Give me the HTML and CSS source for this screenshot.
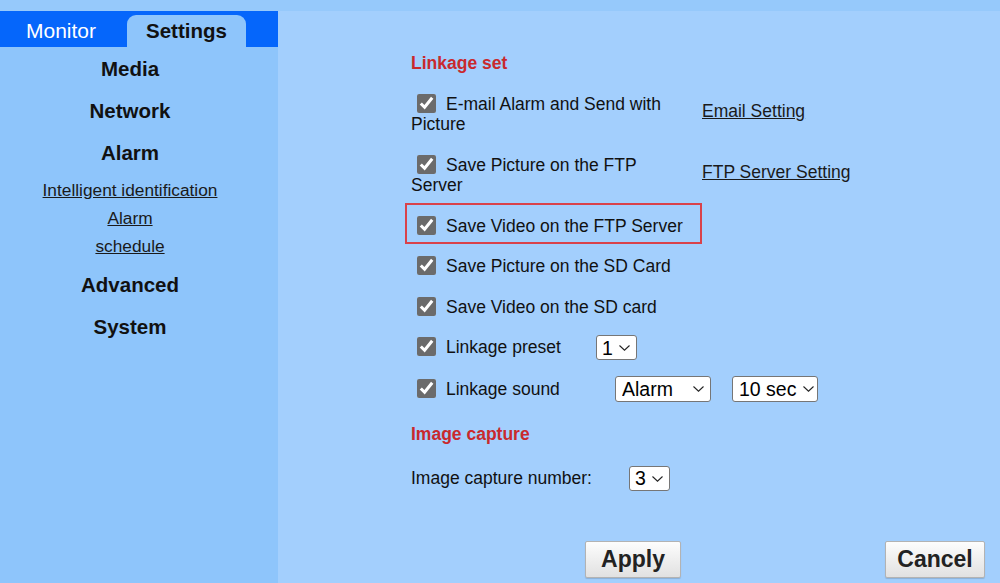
FILE: index.html
```html
<!DOCTYPE html>
<html lang="en">
<head>
    <meta charset="UTF-8">
    <meta name="viewport" content="width=device-width, initial-scale=1.0">
    <title>Settings - Linkage set</title>
    <link rel="stylesheet" href="styles.css">
</head>
<body>

<div class="top-strip"></div>

<div class="layout">
    <!-- Menu lateral -->
    <aside class="sidebar">
        <div class="tabs">
            <div class="tab">Monitor</div>
            <div class="tab active">Settings</div>
        </div>
        <nav class="menu">
            <div class="menu-head">Media</div>
            <div class="menu-head">Network</div>
            <div class="menu-head">Alarm</div>
            <div class="submenu">
                <a href="#">Intelligent identification</a>
                <a href="#">Alarm</a>
                <a href="#">schedule</a>
            </div>
            <div class="menu-head">Advanced</div>
            <div class="menu-head">System</div>
        </nav>
    </aside>

    <!-- Contenido principal -->
    <main class="content">
        <div class="section-title">Linkage set</div>

        <div class="row">
            <label class="cell-label"><input type="checkbox" checked>E-mail Alarm and Send with Picture</label>
            <a href="#" class="cell-link">Email Setting</a>
        </div>
        <div class="row">
            <label class="cell-label"><input type="checkbox" checked>Save Picture on the FTP Server</label>
            <a href="#" class="cell-link">FTP Server Setting</a>
        </div>
        <div class="row">
            <label class="cell-label marked"><input type="checkbox" checked>Save Video on the FTP Server</label>
        </div>
        <div class="row">
            <label class="cell-label"><input type="checkbox" checked>Save Picture on the SD Card</label>
        </div>
        <div class="row">
            <label class="cell-label"><input type="checkbox" checked>Save Video on the SD card</label>
        </div>

        <div class="row row-select">
            <label class="cell-label preset-label"><input type="checkbox" checked>Linkage preset</label>
            <span class="sel-wrap">
                <select class="sel sel-num">
                    <option>1</option>
                    <option>2</option>
                    <option>3</option>
                </select>
                <svg class="chev" width="11" height="6" viewBox="0 0 11 6"><path d="M0.5 0.5 L5.5 5.2 L10.5 0.5" fill="none" stroke="#222" stroke-width="1.1"/></svg>
            </span>
        </div>
        <div class="row row-select">
            <label class="cell-label sound-label"><input type="checkbox" checked>Linkage sound</label>
            <span class="sel-wrap sound-wrap">
                <select class="sel sel-sound">
                    <option>Alarm</option>
                    <option>Bell</option>
                </select>
                <svg class="chev" width="11" height="6" viewBox="0 0 11 6"><path d="M0.5 0.5 L5.5 5.2 L10.5 0.5" fill="none" stroke="#222" stroke-width="1.1"/></svg>
            </span>
            <span class="sel-wrap time-wrap">
                <select class="sel sel-time">
                    <option>10 sec</option>
                    <option>20 sec</option>
                    <option>30 sec</option>
                </select>
                <svg class="chev" width="11" height="6" viewBox="0 0 11 6"><path d="M0.5 0.5 L5.5 5.2 L10.5 0.5" fill="none" stroke="#222" stroke-width="1.1"/></svg>
            </span>
        </div>

        <div class="section-title second">Image capture</div>

        <div class="row row-select capture-row">
            <span class="cell-label capture-label">Image capture number:</span>
            <span class="sel-wrap">
                <select class="sel sel-num">
                    <option>3</option>
                    <option>1</option>
                    <option>2</option>
                </select>
                <svg class="chev" width="11" height="6" viewBox="0 0 11 6"><path d="M0.5 0.5 L5.5 5.2 L10.5 0.5" fill="none" stroke="#222" stroke-width="1.1"/></svg>
            </span>
        </div>

        <div class="buttons">
            <button class="btn btn-apply">Apply</button>
            <button class="btn btn-cancel">Cancel</button>
        </div>
    </main>
</div>

</body>
</html>
```

FILE: styles.css
```css
body {
    margin: 0;
    height: 583px;
    overflow: hidden;
    font-family: "Liberation Sans", Arial, sans-serif;
    background-color: #a3cffd;
    color: #111;
}

/* Franja superior */
.top-strip {
    height: 11px;
    background-color: #96c9fb;
}

.layout {
    display: flex;
    height: 572px;
}

/* Menu lateral */
.sidebar {
    width: 278px;
    flex-shrink: 0;
    background-color: #8ec5fb;
}

.tabs {
    display: flex;
    align-items: flex-end;
    gap: 5px;
    height: 36px;
    background-color: #0566fb;
}

.tab {
    height: 32px;
    display: flex;
    align-items: center;
    padding: 0 26px;
    font-size: 21px;
    color: #fff;
}

.tab.active {
    padding: 0 19px;
    font-size: 20.5px;
    font-weight: bold;
    color: #111;
    background-color: #8ec5fb;
    border-radius: 9px 9px 0 0;
}

.menu {
    text-align: center;
    padding: 1px 18px 0 0;
}

.menu-head {
    font-size: 20.5px;
    font-weight: bold;
    line-height: 42px;
}

.submenu {
    display: flex;
    flex-direction: column;
    align-items: center;
    margin: 2px 0 4px;
}

.submenu a {
    font-size: 17.3px;
    line-height: 28px;
    color: #1a1a1a;
}

/* Contenido */
.content {
    flex: 1;
    padding: 32px 0 0 133px;
    font-size: 17.5px;
    line-height: 20.5px;
    color: #111;
}

.section-title {
    padding: 10px 0;
    font-weight: bold;
    color: #c9292d;
}

.section-title.second {
    margin-top: 4px;
}

.row {
    display: flex;
    align-items: center;
    padding: 10px 0;
}

.row-select {
    padding: 8px 0;
}

.capture-row {
    padding-top: 11px;
}

.cell-label {
    box-sizing: border-box;
    width: 291px;
    padding-right: 14px;
    position: relative;
}

.cell-label input {
    width: 19px;
    height: 19px;
    margin: 0 10px 0 6px;
    vertical-align: -3px;
    accent-color: #6b6b6b;
}

/* Recuadro rojo de marcado */
.cell-label.marked::after {
    content: '';
    position: absolute;
    top: -13px;
    bottom: -8px;
    left: -6px;
    right: 0;
    border: 2px solid #d9424a;
}

.preset-label {
    width: 185px;
}

.sound-label {
    width: 204px;
}

.capture-label {
    width: 218px;
}

.cell-link {
    margin-bottom: 6px;
    color: #1a1a1a;
}

/* Selectores */
.sel-wrap {
    position: relative;
    display: flex;
}

.sound-wrap {
    margin-right: 21px;
}

.chev {
    position: absolute;
    right: 7px;
    top: 10px;
    pointer-events: none;
}

.time-wrap .chev {
    right: 4px;
}

.sel {
    -webkit-appearance: none;
    appearance: none;
    box-sizing: border-box;
    height: 26px;
    font-family: "Liberation Sans", Arial, sans-serif;
    font-size: 19.5px;
    color: #000;
    background-color: #fff;
    border: 1px solid #767676;
    border-radius: 3px;
    padding: 0 0 0 6px;
}

.sel-num {
    width: 41px;
    height: 25px;
    padding-left: 5px;
}

.sel-sound {
    width: 96px;
}

.sel-time {
    width: 86px;
}

/* Botones */
.buttons {
    display: flex;
    gap: 204px;
    margin: 42px 0 0 174px;
}

.btn {
    height: 37px;
    font-family: "Liberation Sans", Arial, sans-serif;
    font-size: 23px;
    font-weight: bold;
    color: #222;
    background: linear-gradient(#fdfdfd, #e1e1e1);
    border: 1px solid #b3b3b3;
    border-radius: 2px;
    box-shadow: 0 1px 1px rgba(0, 0, 0, 0.15);
    padding: 0;
}

.btn-apply {
    width: 96px;
}

.btn-cancel {
    width: 100px;
}
```
